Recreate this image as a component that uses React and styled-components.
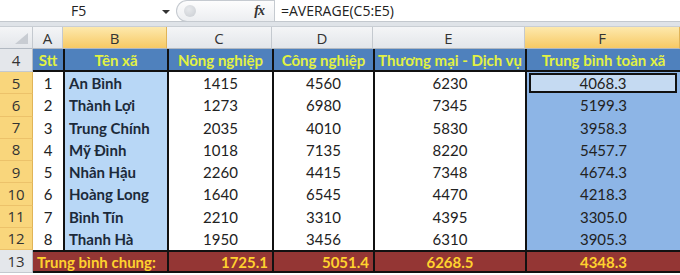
import React from "react";
import styled, { createGlobalStyle } from "styled-components";

const Global = createGlobalStyle`
  html, body { margin: 0; padding: 0; background: #fff; overflow: hidden; }
  #root { width: 680px; height: 275px; overflow: hidden; }
`;

const Page = styled.div`
  width: 680px;
  display: flex;
  flex-direction: column;
  font-family: Lato, "Open Sans", sans-serif;
  & > * { flex-shrink: 0; }
`;

const FormulaBar = styled.div`
  height: 22px;
  display: flex;
  align-items: center;
  background: #fff;
  border-bottom: 1px solid #c3c8ce;
  box-sizing: border-box;
`;

const NameBox = styled.div`
  width: 176px;
  height: 100%;
  display: flex;
  align-items: center;
  position: relative;
  font-family: "Open Sans", "DejaVu Sans", sans-serif;
  font-size: 14px;
  color: #222;
  padding-left: 71px;
  box-sizing: border-box;
`;

const Arrow = styled.span`
  position: absolute;
  left: 162px;
  top: 10px;
  width: 0;
  height: 0;
  border-left: 4px solid transparent;
  border-right: 4px solid transparent;
  border-top: 4px solid #333;
`;

const FxPill = styled.div`
  width: 98px;
  height: 22px;
  box-sizing: border-box;
  border: 1px solid #c5cad0;
  border-right: none;
  border-radius: 11px 0 0 11px;
  background: linear-gradient(#fdfdfd, #eceef1);
  display: flex;
  align-items: center;
  justify-content: space-between;
  padding: 0 10px 0 7px;
`;

const Knob = styled.span`
  width: 12px;
  height: 12px;
  border-radius: 50%;
  background: radial-gradient(circle at 40% 35%, #e6e8eb, #c9cdd2);
`;

const Fx = styled.span`
  font-family: "Liberation Serif", serif;
  font-style: italic;
  font-weight: bold;
  font-size: 14px;
  color: #333;
  letter-spacing: -1px;
`;

const FormulaText = styled.div`
  flex: 1;
  height: 100%;
  border-left: 1px solid #c5cad0;
  display: flex;
  align-items: center;
  padding-left: 6px;
  font-family: "Open Sans", "DejaVu Sans", sans-serif;
  font-size: 14px;
  color: #222;
`;

const Band = styled.div`
  height: 5px;
  background: #dfe3e8;
  border-bottom: 1px solid #c9ced4;
  box-sizing: border-box;
`;

const Sheet = styled.div`
  display: grid;
  grid-template-columns: 33px 30px 104px 105px 101px 152px 155px;
  grid-template-rows: 22px 23px repeat(8, 22.25px) 23px;
`;

const ColHead = styled.div`
  box-sizing: border-box;
  display: flex;
  align-items: center;
  justify-content: center;
  font-size: 15px;
  color: #333;
  font-family: "Open Sans", Lato, sans-serif;
  background: ${(p) =>
    p.$sel
      ? "linear-gradient(#fde9ad, #f7c964)"
      : "linear-gradient(#f4f5f7, #e3e6ea)"};
  border-right: 1px solid ${(p) => (p.$sel ? "#e0b458" : "#c4c9cf")};
  border-bottom: 1px solid #b2b9c2;
`;

const Corner = styled(ColHead)`
  position: relative;
  &::after {
    content: "";
    position: absolute;
    right: 4px;
    bottom: 4px;
    width: 0;
    height: 0;
    border-left: 13px solid transparent;
    border-bottom: 11px solid #c8ccd2;
  }
`;

const RowHead = styled.div`
  box-sizing: border-box;
  display: flex;
  align-items: center;
  justify-content: center;
  font-size: 15px;
  color: #333;
  font-family: "Open Sans", Lato, sans-serif;
  background: ${(p) => (p.$sel ? "#f9d67c" : "#e4e7eb")};
  border-right: 1px solid ${(p) => (p.$sel ? "#e0b458" : "#b2b9c2")};
  border-bottom: 1px solid ${(p) => (p.$sel ? "#ecc26a" : "#c4c9cf")};
`;

const Cell = styled.div`
  box-sizing: border-box;
  display: flex;
  align-items: center;
  justify-content: ${(p) => p.$align || "center"};
  padding: 0 ${(p) => (p.$align === "flex-end" ? "4px" : "0")} 0
    ${(p) => (p.$align === "flex-start" ? "4px" : "0")};
  background: ${(p) => p.$bg || "#fff"};
  color: ${(p) => p.$color || "#222"};
  font-weight: ${(p) => (p.$bold ? 700 : 400)};
  font-size: 15px;
  white-space: nowrap;
  overflow: hidden;
  border-left: ${(p) => (p.$bl ? "2px solid #111" : "none")};
  border-top: ${(p) => (p.$bt ? "2px solid #111" : "none")};
  border-bottom: ${(p) => (p.$bb ? "2px solid #111" : "none")};
  grid-column: ${(p) => p.$span || "auto"};
  position: relative;
`;

const Active = styled.div`
  position: absolute;
  inset: 1px 3px 1px 2px;
  border: 2px solid #111;
  background: #c5daf2;
  display: flex;
  align-items: center;
  justify-content: center;
`;

const HEAD_BG = "#4f81bd";
const HEAD_FG = "#e2f242";
const TOTAL_BG = "#943634";
const TOTAL_FG = "#ffd22e";

const rows = [
  [1, "An Bình", 1415, 4560, 6230, "4068.3"],
  [2, "Thành Lợi", 1273, 6980, 7345, "5199.3"],
  [3, "Trung Chính", 2035, 4010, 5830, "3958.3"],
  [4, "Mỹ Đình", 1018, 7135, 8220, "5457.7"],
  [5, "Nhân Hậu", 2260, 4415, 7348, "4674.3"],
  [6, "Hoàng Long", 1640, 6545, 4470, "4218.3"],
  [7, "Bình Tín", 2210, 3310, 4395, "3305.0"],
  [8, "Thanh Hà", 1950, 3456, 6310, "3905.3"],
];

const headers = ["Stt", "Tên xã", "Nông nghiệp", "Công nghiệp", "Thương mại - Dịch vụ", "Trung bình toàn xã"];

export default function App() {
  return (
    <Page>
      <Global />
      <FormulaBar>
        <NameBox>
          F5
          <Arrow />
        </NameBox>
        <FxPill>
          <Knob />
          <Fx>fx</Fx>
        </FxPill>
        <FormulaText>=AVERAGE(C5:E5)</FormulaText>
      </FormulaBar>
      <Band />
      <Sheet>
        <Corner />
        {["A", "B", "C", "D", "E", "F"].map((c) => (
          <ColHead key={c} $sel={c === "B" || c === "F"}>
            {c}
          </ColHead>
        ))}

        <RowHead>4</RowHead>
        {headers.map((h, i) => (
          <Cell key={h} $bg={HEAD_BG} $color={HEAD_FG} $bold $bl={i > 0} $bb>
            {h}
          </Cell>
        ))}

        {rows.map((r, idx) => (
          <React.Fragment key={r[0]}>
            <RowHead $sel>{idx + 5}</RowHead>
            <Cell>{r[0]}</Cell>
            <Cell $bl $bg="#b8d7f6" $color="#1c2a3a" $bold $align="flex-start">
              {r[1]}
            </Cell>
            <Cell $bl>{r[2]}</Cell>
            <Cell $bl>{r[3]}</Cell>
            <Cell $bl>{r[4]}</Cell>
            <Cell $bl $bg="#8db5e6">
              {idx === 0 ? <Active>{r[5]}</Active> : r[5]}
            </Cell>
          </React.Fragment>
        ))}

        <RowHead>13</RowHead>
        <Cell $span="span 2" $bg={TOTAL_BG} $color={TOTAL_FG} $bold $bt $bb $align="flex-start">
          Trung bình chung:
        </Cell>
        <Cell $bl $bt $bb $bg={TOTAL_BG} $color={TOTAL_FG} $bold $align="flex-end">
          1725.1
        </Cell>
        <Cell $bl $bt $bb $bg={TOTAL_BG} $color={TOTAL_FG} $bold $align="flex-end">
          5051.4
        </Cell>
        <Cell $bl $bt $bb $bg={TOTAL_BG} $color={TOTAL_FG} $bold>
          6268.5
        </Cell>
        <Cell $bl $bt $bb $bg={TOTAL_BG} $color={TOTAL_FG} $bold>
          4348.3
        </Cell>
      </Sheet>
    </Page>
  );
}
